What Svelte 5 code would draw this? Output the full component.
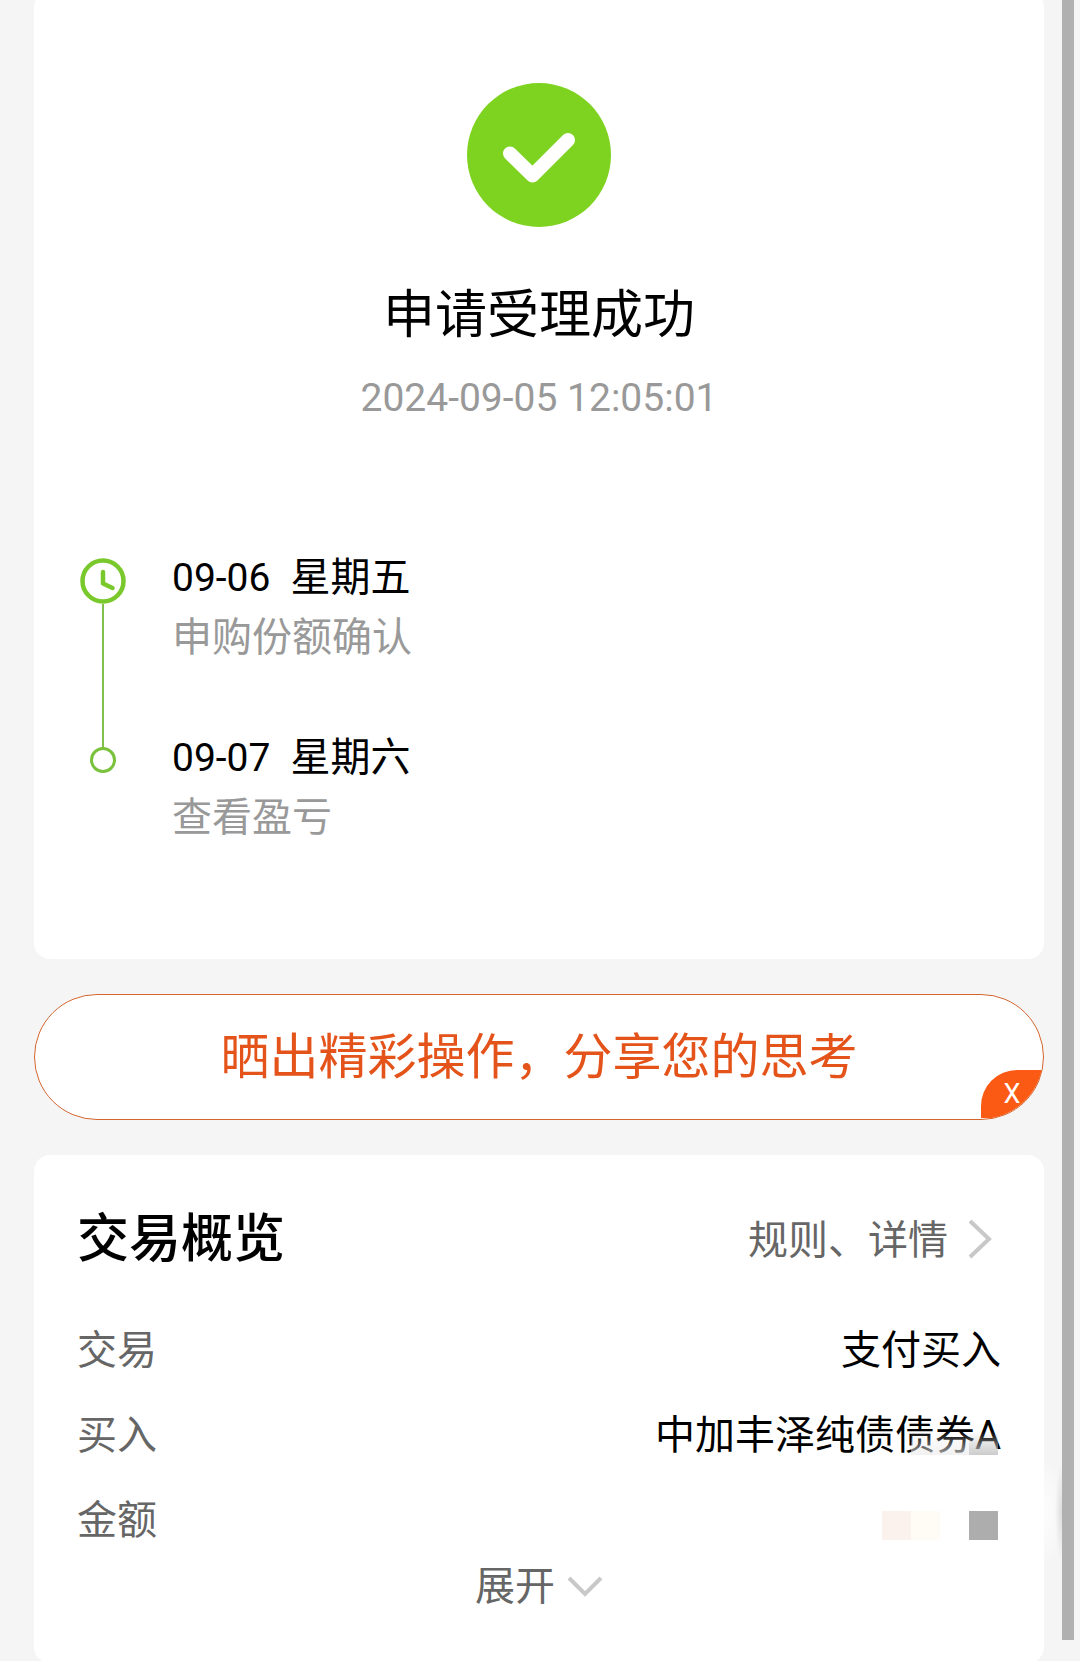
<script>
  const steps = [
    { date: '09-06', day: '星期五', text: '申购份额确认' },
    { date: '09-07', day: '星期六', text: '查看盈亏' }
  ]

  const rows = [
    { label: '交易', value: '支付买入' },
    { label: '买入', value: '中加丰泽纯债债券A', shade: true },
    { label: '金额', masked: true }
  ]

  let shareOpen = $state(true)
</script>

<main class="page">
  <section class="card result">
    <svg class="success" viewBox="0 0 144 144" aria-hidden="true">
      <circle cx="72" cy="72" r="72" fill="#7ed321" />
      <path d="M43 70.500L65.500 92.500L101 57" fill="none" stroke="#fff" stroke-width="14" stroke-linecap="round" stroke-linejoin="round" />
    </svg>
    <h1>申请受理成功</h1>
    <time class="stamp">2024-09-05 12:05:01</time>

    <ol class="steps">
      {#each steps as step, i}
        <li>
          <div class="rail">
            {#if i === 0}
              <svg class="clock" viewBox="0 0 46 46" aria-hidden="true">
                <circle cx="23" cy="23" r="20.500" fill="none" stroke="#7ac92c" stroke-width="4.500" />
                <path d="M23 14V25.500L32.500 30" fill="none" stroke="#7ac92c" stroke-width="4.500" stroke-linecap="round" stroke-linejoin="round" />
              </svg>
            {:else}
              <span class="dot"></span>
            {/if}
            {#if i < steps.length - 1}
              <span class="line"></span>
            {/if}
          </div>
          <div class="step">
            <p class="when"><span class="date">{step.date}</span><span>{step.day}</span></p>
            <p class="what">{step.text}</p>
          </div>
        </li>
      {/each}
    </ol>
  </section>

  {#if shareOpen}
    <div class="share">
      <button class="share-main" type="button">晒出精彩操作，分享您的思考</button>
      <button class="share-close" type="button" aria-label="关闭" onclick={() => (shareOpen = false)}>X</button>
    </div>
  {/if}

  <section class="card overview">
    <header>
      <h2>交易概览</h2>
      <a href="#rules">
        <span>规则、详情</span>
        <svg class="next" viewBox="0 0 24 40" aria-hidden="true">
          <path d="M2 2L21 20L2 38" fill="none" stroke="#c8c8c8" stroke-width="4" />
        </svg>
      </a>
    </header>

    <dl>
      {#each rows as row}
        <div class="row">
          <dt>{row.label}</dt>
          <dd>
            {#if row.masked}
              <span class="mask"><i class="pink"></i><i class="cream"></i><i></i><i class="grey"></i></span>
            {:else}
              {row.value}
            {/if}
            {#if row.shade}
              <span class="shade"><i></i><i></i><i class="dark"></i></span>
            {/if}
          </dd>
        </div>
      {/each}
    </dl>

    <button class="more" type="button">
      展开
      <svg viewBox="0 0 36 22" aria-hidden="true">
        <path d="M2 2L18 18L34 2" fill="none" stroke="#c8c8c8" stroke-width="4" />
      </svg>
    </button>
  </section>

  <span class="handle"></span>
  <span class="scrollbar"></span>
</main>

<style>
  :global(body) {
    margin: 0;
    background: #f5f5f5;
  }

  .page {
    position: relative;
    box-sizing: border-box;
    padding: 0 36px 0 34px;
    overflow: hidden;
    background: #f5f5f5;
    color: #000;
    font-family: Roboto, "Noto Sans CJK SC", sans-serif;
    font-size: 40px;
    line-height: 60px;
  }

  h1, h2, p, ol, dl, dd {
    margin: 0;
    padding: 0;
  }

  button {
    padding: 0;
    border: 0;
    background: none;
    font-family: inherit;
    cursor: pointer;
  }

  .card {
    border-radius: 16px;
    background: #fff;
  }

  /* the page is scrolled a little, so the top edge is cut off */
  .result {
    display: flex;
    flex-direction: column;
    align-items: center;
    margin-top: -9px;
    padding: 92px 43px 111px;
  }

  .success {
    width: 144px;
    height: 144px;
  }

  h1 {
    margin-top: 51px;
    font-size: 52px;
    font-weight: 400;
    line-height: 76px;
  }

  .stamp {
    margin-top: 14px;
    color: #999;
    font-size: 39px;
  }

  .steps {
    align-self: stretch;
    margin-top: 120px;
    list-style: none;
  }

  .steps li {
    display: flex;
    gap: 43px;
  }

  .steps li:not(:last-child) .step {
    padding-bottom: 60px;
  }

  .rail {
    display: flex;
    flex-direction: column;
    align-items: center;
    width: 52px;
  }

  .clock {
    flex: none;
    width: 46px;
    height: 46px;
    margin-top: 10px;
  }

  /* runs on into the next step, down to its dot */
  .line {
    flex: 1;
    width: 2px;
    margin-bottom: -20px;
    background: #80c04c;
  }

  .dot {
    box-sizing: border-box;
    width: 26px;
    height: 26px;
    margin-top: 19px;
    border: 3px solid #7ac23c;
    border-radius: 50%;
  }

  .when {
    display: flex;
    gap: 20px;
  }

  .date {
    font-size: 39px;
  }

  .what {
    color: #999;
  }

  .share {
    position: relative;
    box-sizing: border-box;
    height: 126px;
    margin: 35px 0;
    overflow: hidden;
    border: 1px solid #d5652f;
    border-radius: 63px;
    background: #fff;
  }

  .share-main {
    width: 100%;
    height: 100%;
    padding-bottom: 9px;
    color: #e4531a;
    font-size: 49px;
  }

  .share-close {
    position: absolute;
    right: 0;
    bottom: 1px;
    width: 62px;
    height: 48px;
    border-radius: 36px 0 0 0;
    background: #fb5a14;
    color: #fff;
    font-size: 27px;
  }

  .overview {
    padding: 44px 43px 52px;
  }

  header {
    display: flex;
    justify-content: space-between;
    align-items: center;
  }

  h2 {
    padding-top: 3px;
    font-size: 52px;
    font-weight: 500;
    line-height: 76px;
  }

  header a {
    display: flex;
    align-items: center;
    gap: 20px;
    padding-right: 9px;
    color: #666;
    text-decoration: none;
  }

  header a span {
    padding-top: 4px;
  }

  .next {
    width: 24px;
    height: 40px;
  }

  dl {
    margin-top: 30px;
  }

  .row {
    display: flex;
    justify-content: space-between;
    line-height: 85px;
  }

  dt {
    color: #666;
  }

  dd {
    position: relative;
  }

  .mask,
  .shade {
    display: flex;
  }

  .mask {
    padding: 33px 3px 0 0;
  }

  .mask i {
    width: 29px;
    height: 29px;
  }

  .pink {
    background: #fbf2ed;
  }

  .cream {
    background: #fffbf5;
  }

  .grey {
    background: #adadad;
  }

  .shade {
    position: absolute;
    right: 3px;
    bottom: 23px;
  }

  .shade i {
    width: 29px;
    height: 24px;
    background: linear-gradient(#fff0, #ebebebaa);
  }

  .shade .dark {
    background: linear-gradient(#fff0, #c4c4c4dd);
  }

  .more {
    display: flex;
    align-items: center;
    gap: 12px;
    margin: 0 auto;
    color: #666;
    font-size: 40px;
    line-height: 48px;
  }

  .more svg {
    width: 36px;
    height: 22px;
  }

  .handle {
    position: absolute;
    right: 18px;
    bottom: 96px;
    width: 18px;
    height: 110px;
    background:
      radial-gradient(7px 50px at right, #dcdcdc, #dcdcdc00),
      radial-gradient(22px 56px at left, #fdfdfd, #fdfdfd00);
  }

  .scrollbar {
    position: absolute;
    top: 0;
    right: 6px;
    bottom: 23px;
    width: 12px;
    background: #b0b0b0;
  }
</style>
